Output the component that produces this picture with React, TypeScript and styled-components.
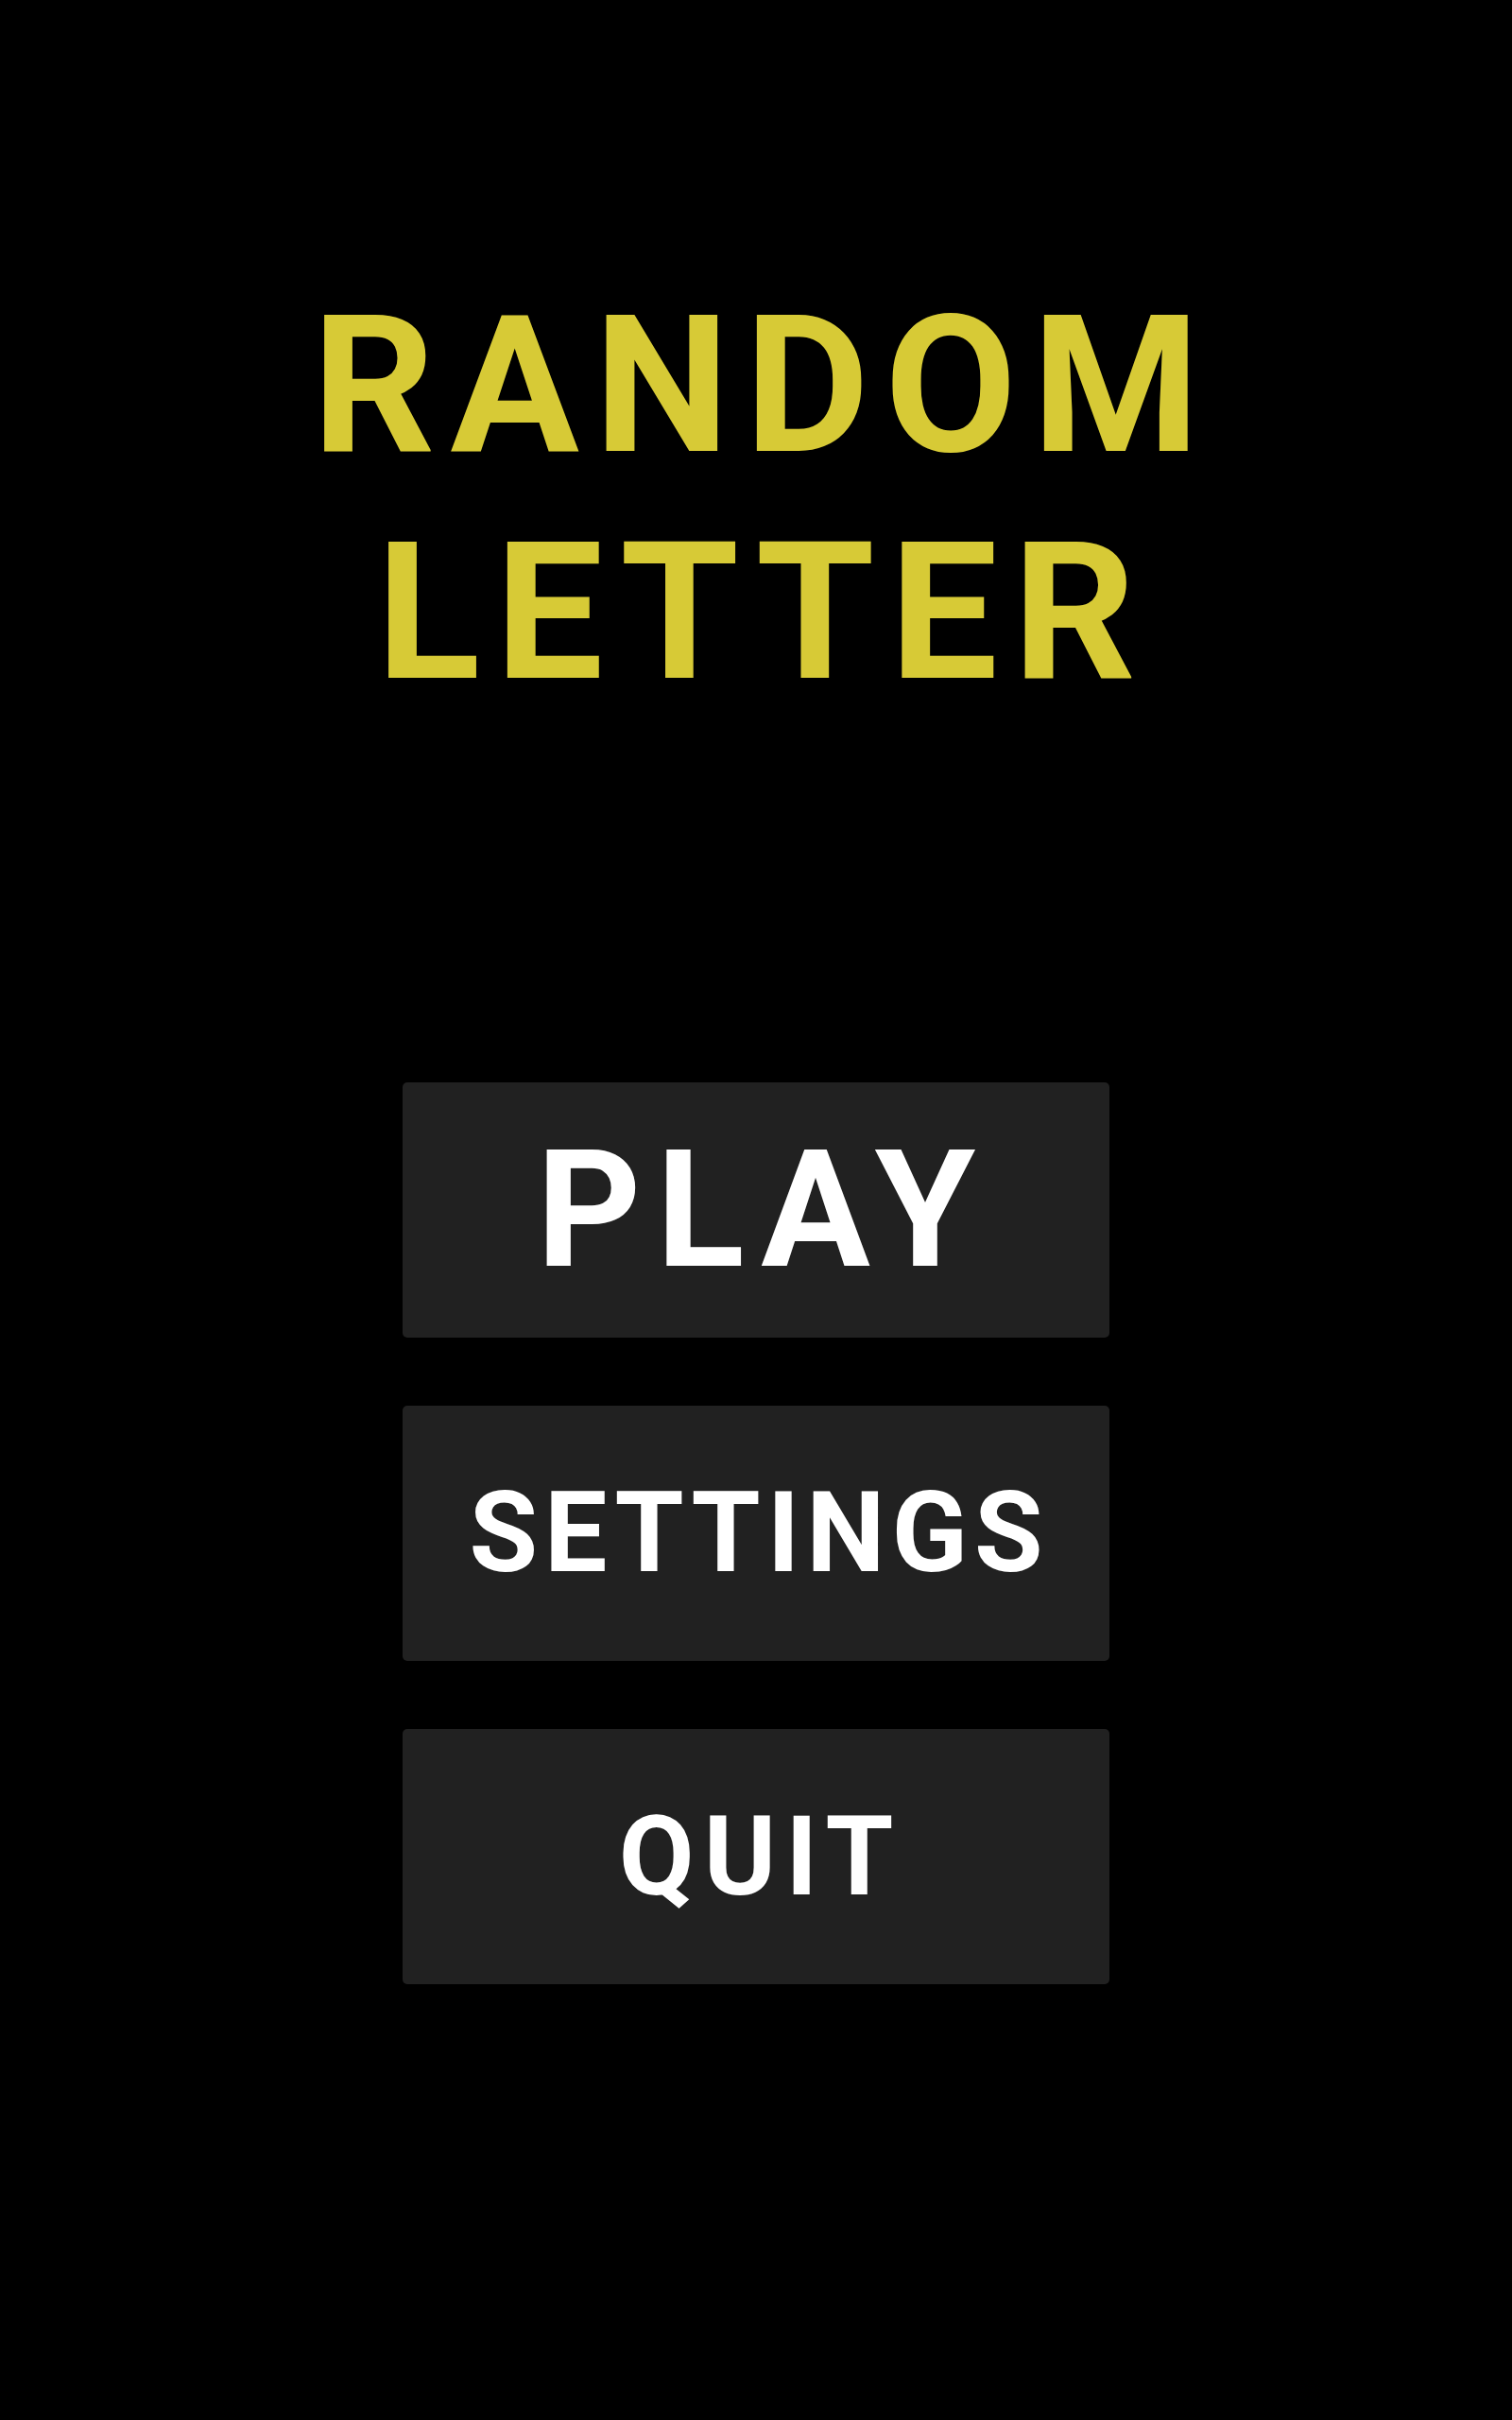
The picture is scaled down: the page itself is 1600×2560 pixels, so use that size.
import React from 'react'
import styled, { createGlobalStyle } from 'styled-components'

const GlobalStyle = createGlobalStyle`
  html, body {
    margin: 0;
    padding: 0;
    background: #000;
  }
  body {
    font-family: Roboto, "Liberation Sans", sans-serif;
  }
`

const Screen = styled.main`
  width: 1600px;
  min-height: 2560px;
  background: #000;
  display: flex;
  flex-direction: column;
  align-items: center;
  padding-top: 288px;
  box-sizing: border-box;
`

const Title = styled.h1`
  margin: 0;
  color: #d7ca36;
  font-family: Roboto, "Liberation Sans", sans-serif;
  font-weight: 700;
  font-size: 203px;
  line-height: 240px;
  letter-spacing: 16px;
  text-align: center;
  text-transform: uppercase;
`

const Line = styled.span`
  display: block;
  margin-right: -16px;
`

const Menu = styled.nav`
  margin-top: 377px;
  display: flex;
  flex-direction: column;
  gap: 72px;
`

const MenuButton = styled.button<{ $size: number; $spacing: number }>`
  width: 748px;
  height: 270px;
  border: none;
  border-radius: 5px;
  background: #212121;
  color: #fff;
  font-family: Roboto, "Liberation Sans", sans-serif;
  font-weight: 700;
  font-size: ${(p) => p.$size}px;
  letter-spacing: ${(p) => p.$spacing}px;
  text-indent: ${(p) => p.$spacing}px;
  display: flex;
  align-items: center;
  justify-content: center;
  cursor: pointer;
  padding: 0;
`

export default function App(): JSX.Element {
  return (
    <>
      <GlobalStyle />
      <Screen>
        <Title>
          <Line>Random</Line>
          <Line>Letter</Line>
        </Title>
        <Menu>
          <MenuButton $size={172} $spacing={16}>PLAY</MenuButton>
          <MenuButton $size={118} $spacing={7}>SETTINGS</MenuButton>
          <MenuButton $size={116} $spacing={10}>QUIT</MenuButton>
        </Menu>
      </Screen>
    </>
  )
}
